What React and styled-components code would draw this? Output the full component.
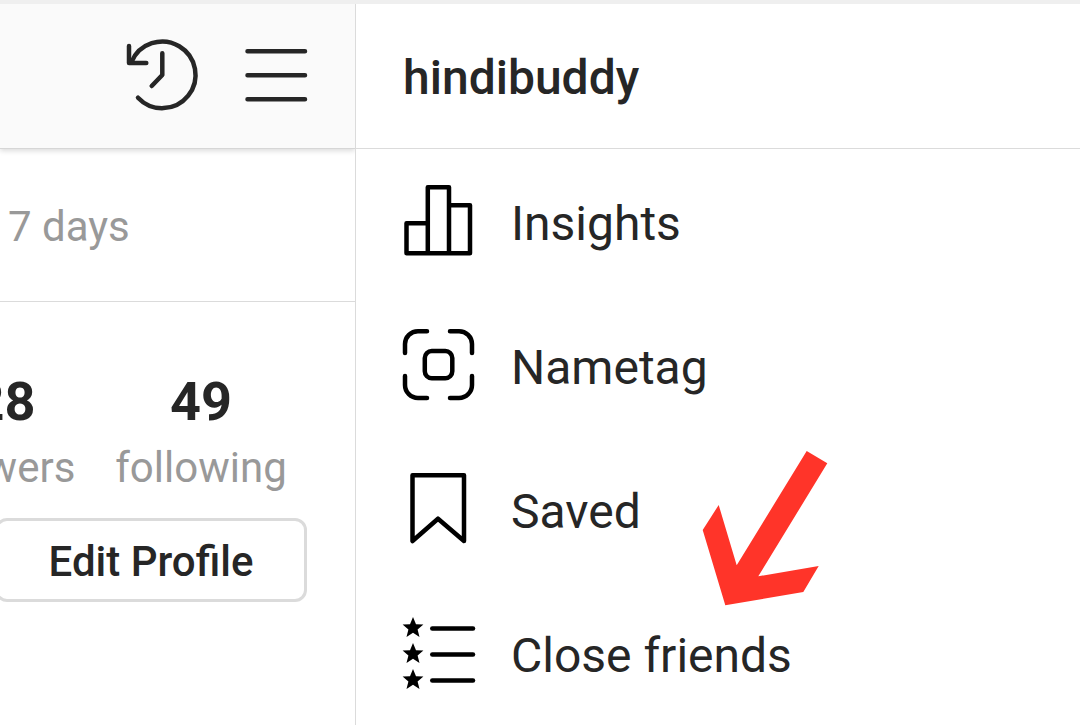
import styled, { createGlobalStyle } from "styled-components";

const GlobalStyle = createGlobalStyle`
    * {
        box-sizing: border-box;
    }

    body {
        margin: 0;
        background: #ffffff;
        color: #262626;
        font-family: Roboto, "Liberation Sans", sans-serif;
        overflow: hidden;
    }

    button {
        font-family: inherit;
        color: inherit;
        cursor: pointer;
    }
`;

const Page = styled.div`
    min-height: 100vh;
    display: flex;
    flex-direction: column;
`;

const StatusStrip = styled.div`
    height: 4px;
    background: #efefef;
`;

const Columns = styled.div`
    flex: 1;
    display: grid;
    grid-template-columns: 355px 1fr;
`;

const Profile = styled.main`
    min-width: 0;
    overflow: hidden;
`;

const TopBar = styled.header`
    height: 145px;
    padding-right: 42px;
    display: flex;
    align-items: center;
    justify-content: flex-end;
    gap: 43px;
    background: #fafafa;
    border-bottom: 1px solid #d6d6d6;
    box-shadow: 0 2px 5px rgba(0, 0, 0, 0.14);
`;

const IconButton = styled.button`
    display: flex;
    padding: 0;
    border: none;
    background: none;
`;

const Icon = styled.svg`
    flex: none;
    width: 72px;
    height: 72px;
    overflow: visible;
    fill: none;
    stroke: currentColor;
    stroke-width: 4.5;
    stroke-linecap: round;
    stroke-linejoin: round;
`;

const Activity = styled.p`
    height: 153px;
    margin: 0;
    padding: 2px 8px 0;
    display: flex;
    align-items: center;
    border-bottom: 1px solid #dbdbdb;
    color: #999999;
    font-size: 42px;
`;

const Summary = styled.section`
    padding: 68px 48px 0 0;
    display: flex;
    flex-direction: column;
    align-items: flex-end;
    gap: 24px;
`;

const Stats = styled.dl`
    margin: 0;
    display: flex;
`;

const Stat = styled.div`
    width: 212px;
    display: flex;
    flex-direction: column-reverse;
    align-items: center;
    gap: 8px;

    dt {
        color: #999999;
        font-size: 42px;
        line-height: 52px;
    }

    dd {
        margin: 0;
        font-size: 54px;
        font-weight: 700;
        line-height: 64px;
    }
`;

const EditButton = styled.button`
    flex: none;
    width: 312px;
    height: 84px;
    padding: 2px 0 0;
    border: 3px solid #dbdbdb;
    border-radius: 12px;
    background: #ffffff;
    font-size: 42px;
    font-weight: 500;
`;

const Drawer = styled.aside`
    border-left: 1px solid #dbdbdb;
`;

const Username = styled.h1`
    height: 145px;
    margin: 0;
    padding: 2px 47px 0;
    display: flex;
    align-items: center;
    border-bottom: 1px solid #dbdbdb;
    font-size: 48px;
    font-weight: 500;
`;

const Menu = styled.ul`
    margin: 0;
    padding: 0;
    list-style: none;
`;

const MenuItem = styled.li`
    position: relative;
`;

const MenuButton = styled.button`
    width: 100%;
    height: 144px;
    padding: 0 47px;
    display: flex;
    align-items: center;
    gap: 36px;
    border: none;
    background: none;
    font-size: 48px;
    text-align: left;

    svg {
        color: #000000;
    }

    span {
        padding-top: 4px;
    }
`;

const Pointer = styled.svg`
    position: absolute;
    left: 346px;
    top: -131px;
    width: 126px;
    height: 156px;
    fill: #ff3429;
    pointer-events: none;
`;

const star = "M0 -11L3 -3.7L10.4 -3.4L4.6 1.4L6.5 8.9L0 4.8L-6.5 8.9L-4.6 1.4L-10.4 -3.4L-3 -3.7Z";

function ArchiveIcon() {
    return (
        <Icon viewBox="0 0 72 72" aria-hidden="true">
            <path d="M12 57.7A33.3 33.3 0 1 0 5.5 22" />
            <path d="M3 6V23H20.3M36.3 13.3V35L25.7 46" />
        </Icon>
    );
}

function MenuIcon() {
    return (
        <Icon viewBox="0 0 72 72" aria-hidden="true">
            <path d="M6.5 11.2H64M6.5 35.2H64M6.5 59.2H64" />
        </Icon>
    );
}

function InsightsIcon() {
    return (
        <Icon viewBox="0 0 72 72" aria-hidden="true">
            <path d="M24.8 38.2H3.5V68.2H67V20.2H46M24.8 68.2V2.2H46V68.2" />
        </Icon>
    );
}

function NametagIcon() {
    return (
        <Icon viewBox="0 0 72 72" aria-hidden="true">
            <path d="M2 24V15A13 13 0 0 1 15 2.2H24M47 2.2H56A13 13 0 0 1 69 15V24M69 47V56A13 13 0 0 1 56 69H47M24 69H15A13 13 0 0 1 2 56V47" />
            <rect x="21.8" y="22" width="27.5" height="27.3" rx="7" />
        </Icon>
    );
}

function SavedIcon() {
    return (
        <Icon viewBox="0 0 72 72" aria-hidden="true">
            <path d="M9.5 2.2H61V68L35 45.7L9.5 68Z" />
        </Icon>
    );
}

function CloseFriendsIcon() {
    return (
        <Icon viewBox="0 0 72 72" aria-hidden="true">
            {[11, 37, 63].map((y) => (
                <g key={y} transform={`translate(10 ${y})`}>
                    <path d={star} fill="currentColor" stroke="none" />
                    <path d="M19.3 0.5H60" />
                </g>
            ))}
        </Icon>
    );
}

const menu = [
    { label: "Insights", Glyph: InsightsIcon },
    { label: "Nametag", Glyph: NametagIcon },
    { label: "Saved", Glyph: SavedIcon },
    { label: "Close friends", Glyph: CloseFriendsIcon, highlighted: true },
];

function App() {
    return (
        <Page>
            <GlobalStyle />
            <StatusStrip />
            <Columns>
                <Profile>
                    <TopBar>
                        <IconButton aria-label="Archive">
                            <ArchiveIcon />
                        </IconButton>
                        <IconButton aria-label="Menu">
                            <MenuIcon />
                        </IconButton>
                    </TopBar>
                    <Activity>7 days</Activity>
                    <Summary>
                        <Stats>
                            <Stat>
                                <dt>followers</dt>
                                <dd>128</dd>
                            </Stat>
                            <Stat>
                                <dt>following</dt>
                                <dd>49</dd>
                            </Stat>
                        </Stats>
                        <EditButton>Edit Profile</EditButton>
                    </Summary>
                </Profile>
                <Drawer>
                    <Username>hindibuddy</Username>
                    <Menu>
                        {menu.map(({ label, Glyph, highlighted }) => (
                            <MenuItem key={label}>
                                <MenuButton>
                                    <Glyph />
                                    <span>{label}</span>
                                </MenuButton>
                                {highlighted && (
                                    <Pointer viewBox="0 0 126 156" aria-hidden="true">
                                        <path d="M104.7 1L125.3 13.3L56.3 126.3L116.7 116L101.3 142L23.3 155.3L0.7 80L16.7 55L34.7 115.3Z" />
                                    </Pointer>
                                )}
                            </MenuItem>
                        ))}
                    </Menu>
                </Drawer>
            </Columns>
        </Page>
    );
}

export default App;
